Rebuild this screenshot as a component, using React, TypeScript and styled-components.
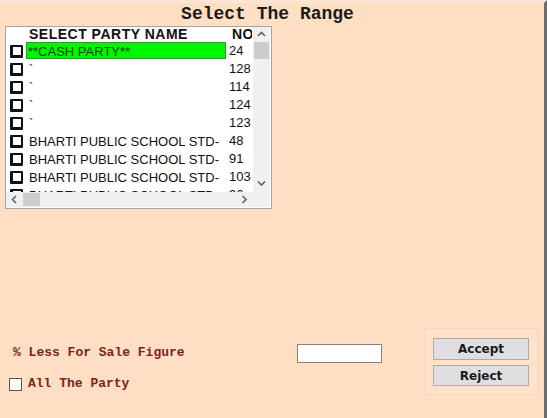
import React from "react";
import styled, { createGlobalStyle } from "styled-components";

const GlobalStyle = createGlobalStyle`
  html, body { margin: 0; padding: 0; }
  body { background: #fedfc3; }
  * { box-sizing: border-box; }
`;

const Page = styled.div`
  width: 547px;
  height: 418px;
  background: #fedfc3;
  border-top: 3px solid #fde6d5;
  border-right: 3px solid #6e6e6e;
  display: flex;
  flex-direction: column;
  overflow: hidden;
`;

const Title = styled.h1`
  margin: 0;
  height: 23px;
  line-height: 22px;
  padding-right: 9px;
  text-align: center;
  font-family: "Liberation Mono", "Courier New", monospace;
  font-weight: bold;
  font-size: 18px;
  color: #1a1a1a;
`;

const ListBox = styled.div`
  margin-left: 5px;
  width: 267px;
  height: 183px;
  border: 1px solid #a3a3a3;
  background: #fff;
  display: grid;
  grid-template-columns: 247px 17px;
  grid-template-rows: 165px 15px;
  overflow: hidden;
`;

const Content = styled.div`
  overflow: hidden;
  font-family: "Liberation Sans", Arial, sans-serif;
  font-size: 13px;
  color: #111;
`;

const HeaderRow = styled.div`
  display: grid;
  grid-template-columns: 20px 200px 26px;
  height: 15px;
  line-height: 15px;
  font-weight: bold;
  font-size: 14px;
  letter-spacing: 0.5px;
  white-space: nowrap;
`;

const HeaderCell = styled.div<{ $pad: number }>`
  padding-left: ${(p) => p.$pad}px;
  overflow: hidden;
`;

const Row = styled.div`
  display: grid;
  grid-template-columns: 20px 200px 27px;
  height: 18px;
  align-items: start;
  white-space: nowrap;
`;

const CheckCell = styled.div`
  height: 18px;
  display: flex;
  align-items: center;
  padding-left: 4px;
`;

const ListCheck = styled.span`
  display: block;
  width: 13px;
  height: 13px;
  background: #fff;
  border: 2px solid #111;
  border-bottom-width: 3px;
  border-left-width: 3px;
  border-radius: 1px;
`;

const NameCell = styled.div<{ $selected?: boolean }>`
  height: 17px;
  line-height: 17px;
  overflow: hidden;
  background: ${(p) => (p.$selected ? "#00f500" : "transparent")};
  border: 1px solid ${(p) => (p.$selected ? "#2f9a2f" : "transparent")};
  padding-left: ${(p) => (p.$selected ? 1 : 2)}px;
  color: ${(p) => (p.$selected ? "#0b3d0b" : "#111")};
`;

const NumCell = styled.div`
  height: 18px;
  line-height: 17px;
  padding-left: 3px;
  overflow: hidden;
`;

const VScroll = styled.div`
  background: #f0f0f0;
  display: flex;
  flex-direction: column;
`;

const HScroll = styled.div`
  background: #f0f0f0;
  display: flex;
  align-items: stretch;
`;

const Corner = styled.div`
  background: #f0f0f0;
`;

const ArrowBtn = styled.div<{ $w: number; $h: number }>`
  width: ${(p) => p.$w}px;
  height: ${(p) => p.$h}px;
  flex: none;
  display: flex;
  align-items: center;
  justify-content: center;
`;

const Track = styled.div<{ $vertical?: boolean }>`
  flex: 1;
  display: flex;
  flex-direction: ${(p) => (p.$vertical ? "column" : "row")};
`;

const VThumb = styled.div`
  margin: 0 1px;
  width: 15px;
  height: 17px;
  background: #cdcdcd;
`;

const HThumb = styled.div`
  margin: 1px 0;
  width: 17px;
  background: #cdcdcd;
`;

const Spacer = styled.div`
  flex: 1;
`;

const BottomRow = styled.div`
  display: flex;
  align-items: flex-start;
  height: 67px;
  margin-bottom: 23px;
`;

const LeftCol = styled.div`
  width: 297px;
  padding-left: 9px;
  padding-top: 17px;
  display: flex;
  flex-direction: column;
  gap: 15px;
  font-family: "Liberation Mono", "Courier New", monospace;
  font-weight: bold;
  font-size: 13px;
  color: #7b1f1f;
`;

const Label = styled.div`
  margin-left: 4px;
  height: 16px;
  line-height: 16px;
  white-space: nowrap;
`;

const CheckRow = styled.label`
  display: flex;
  align-items: center;
  gap: 6px;
  height: 16px;
  line-height: 16px;
`;

const PlainCheck = styled.span`
  display: block;
  width: 13px;
  height: 13px;
  background: #fff;
  border: 1px solid #5e5050;
`;

const NumberInput = styled.div`
  margin-top: 16px;
  width: 85px;
  height: 19px;
  background: #fff;
  border: 1px solid #8c7f74;
`;

const ButtonPanel = styled.div`
  margin-left: auto;
  margin-right: 6px;
  width: 114px;
  height: 67px;
  background: #fde2cb;
  border: 1px solid #f7d7bb;
  padding: 9px 0 0 8px;
  display: flex;
  flex-direction: column;
  gap: 5px;
`;

const Button = styled.div<{ $h: number }>`
  width: 96px;
  height: ${(p) => p.$h}px;
  background: #dfdfe1;
  border: 1px solid #b4aaa2;
  display: flex;
  align-items: center;
  justify-content: center;
  font-family: "DejaVu Sans", Tahoma, sans-serif;
  font-weight: bold;
  font-size: 12px;
  color: #1a1a1a;
`;

const Chevron: React.FC<{ dir: "up" | "down" | "left" | "right" }> = ({ dir }) => {
  const pts =
    dir === "up"
      ? "1,5 4.5,1.5 8,5"
      : dir === "down"
      ? "1,1.5 4.5,5 8,1.5"
      : dir === "left"
      ? "5,1 1.5,4.5 5,8"
      : "1.5,1 5,4.5 1.5,8";
  const w = dir === "up" || dir === "down" ? 9 : 7;
  const h = dir === "up" || dir === "down" ? 7 : 9;
  return (
    <svg width={w} height={h} viewBox={`0 0 ${w} ${h}`}>
      <polyline points={pts} fill="none" stroke="#606060" strokeWidth="1.6" />
    </svg>
  );
};

const rows: { name: string; no: string; selected?: boolean }[] = [
  { name: "**CASH PARTY**", no: "24", selected: true },
  { name: "`", no: "128" },
  { name: "`", no: "114" },
  { name: "`", no: "124" },
  { name: "`", no: "123" },
  { name: "BHARTI PUBLIC SCHOOL STD-", no: "48" },
  { name: "BHARTI PUBLIC SCHOOL STD-", no: "91" },
  { name: "BHARTI PUBLIC SCHOOL STD-", no: "103" },
  { name: "BHARTI PUBLIC SCHOOL STD-", no: "96" },
];

export default function App() {
  return (
    <>
      <GlobalStyle />
      <Page>
        <Title>Select The Range</Title>
        <ListBox>
          <Content>
            <HeaderRow>
              <div />
              <HeaderCell $pad={3}>SELECT PARTY NAME</HeaderCell>
              <HeaderCell $pad={6}>NO</HeaderCell>
            </HeaderRow>
            {rows.map((r, i) => (
              <Row key={i}>
                <CheckCell>
                  <ListCheck />
                </CheckCell>
                <NameCell $selected={r.selected}>{r.name}</NameCell>
                <NumCell>{r.no}</NumCell>
              </Row>
            ))}
          </Content>
          <VScroll>
            <ArrowBtn $w={17} $h={15}>
              <Chevron dir="up" />
            </ArrowBtn>
            <Track $vertical>
              <VThumb />
            </Track>
            <ArrowBtn $w={17} $h={17}>
              <Chevron dir="down" />
            </ArrowBtn>
          </VScroll>
          <HScroll>
            <ArrowBtn $w={17} $h={15}>
              <Chevron dir="left" />
            </ArrowBtn>
            <Track>
              <HThumb />
            </Track>
            <ArrowBtn $w={17} $h={15}>
              <Chevron dir="right" />
            </ArrowBtn>
          </HScroll>
          <Corner />
        </ListBox>
        <Spacer />
        <BottomRow>
          <LeftCol>
            <Label>% Less For Sale Figure</Label>
            <CheckRow>
              <PlainCheck />
              All The Party
            </CheckRow>
          </LeftCol>
          <NumberInput />
          <ButtonPanel>
            <Button $h={22}>Accept</Button>
            <Button $h={21}>Reject</Button>
          </ButtonPanel>
        </BottomRow>
      </Page>
    </>
  );
}
